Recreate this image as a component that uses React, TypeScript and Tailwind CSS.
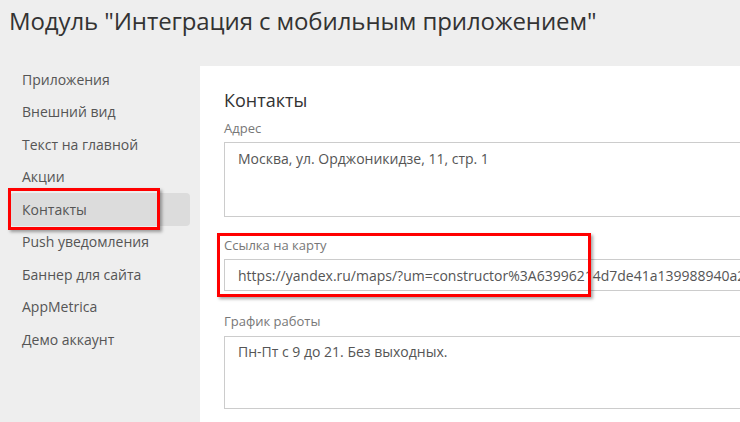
const menu = [
  'Приложения',
  'Внешний вид',
  'Текст на главной',
  'Акции',
  'Контакты',
  'Push уведомления',
  'Баннер для сайта',
  'AppMetrica',
  'Демо аккаунт',
];

const active = 'Контакты';

function Label({ children }: { children: string }) {
  return <div className="text-[13px] leading-[18px] text-[#777]">{children}</div>;
}

export default function App() {
  return (
    <div
      className="relative h-[422px] w-[740px] overflow-hidden bg-[#eeeeee]"
      style={{ fontFamily: '"Open Sans", "Noto Sans", sans-serif' }}
    >
      <h1 className="h-[63px] pl-[9px] pt-[3px] text-[24px] leading-[36px] font-normal tracking-[-0.1px] text-[#333]">
        Модуль "Интеграция с мобильным приложением"
      </h1>

      <div className="flex">
        <nav className="w-[200px] shrink-0 pl-[10px] pr-[10px]">
          {menu.map((item) => (
            <div
              key={item}
              className={
                item === active
                  ? 'flex h-[32.5px] items-center rounded-[4px] bg-[#dcdcdc] pl-[12px] text-[14px] text-[#555]'
                  : 'flex h-[32.5px] items-center pl-[12px] text-[14px] text-[#555]'
              }
            >
              {item}
            </div>
          ))}
        </nav>

        <main className="mt-[3px] h-[360px] flex-1 overflow-hidden bg-white pl-[24px] pt-[22px]">
          <h2 className="text-[18px] leading-[24px] text-[#333]">Контакты</h2>

          <div className="mt-[7px]">
            <Label>Адрес</Label>
          </div>
          <div className="mt-[5px] h-[75px] w-[560px] border border-[#cccccc] px-[13px] pt-[6px] text-[14px] leading-[20px] text-[#555]">
            Москва, ул. Орджоникидзе, 11, стр. 1
          </div>

          <div className="mt-[19px]">
            <Label>Ссылка на карту</Label>
          </div>
          <div className="mt-[5px] flex h-[32px] w-[560px] items-center overflow-hidden whitespace-nowrap border border-[#cccccc] px-[13px] text-[14px] text-[#555]">
            https://yandex.ru/maps/?um=constructor%3A63996214d7de41a139988940a2c7f1d5
          </div>

          <div className="mt-[21px]">
            <Label>График работы</Label>
          </div>
          <div className="mt-[6px] h-[73px] w-[560px] border border-[#cccccc] px-[13px] pt-[5px] text-[14px] leading-[20px] text-[#555]">
            Пн-Пт с 9 до 21. Без выходных.
          </div>
        </main>
      </div>

      {/* annotation boxes */}
      <div className="absolute left-[8px] top-[188px] h-[42px] w-[152px] border-[3px] border-[#ff0000] shadow-[2px_2px_3px_rgba(0,0,0,0.35)]" />
      <div className="absolute left-[217px] top-[233px] h-[64px] w-[374px] border-[3px] border-[#ff0000] shadow-[2px_2px_3px_rgba(0,0,0,0.35)]" />
    </div>
  );
}
